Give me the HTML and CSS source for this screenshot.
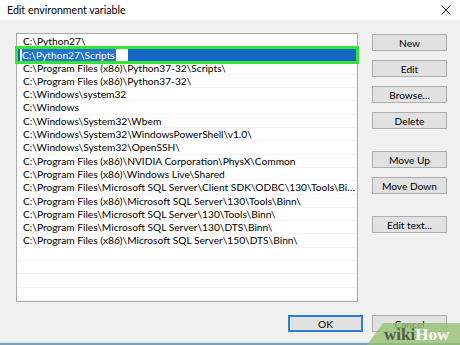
FILE: index.html
```html
<!DOCTYPE html>
<html lang="en">
<head>
  <meta charset="UTF-8">
  <title>Edit environment variable</title>
  <link rel="stylesheet" href="styles.css">
</head>
<body>

<div class="window">
  <div class="titlebar">
    <span class="title">Edit environment variable</span>
    <svg class="close" width="10" height="10" viewBox="0 0 10 10">
      <path d="M0.5 0.5 L9.5 9.5 M9.5 0.5 L0.5 9.5" stroke="#222" stroke-width="1" fill="none"/>
    </svg>
  </div>

  <div class="content">
    <div class="list">
      <div class="row">C:\Python27\</div>
      <div class="row selected">
        <span class="edit"><span class="sel">C:\Python27\Scripts</span></span>
      </div>
      <div class="row">C:\Program Files (x86)\Python37-32\Scripts\</div>
      <div class="row">C:\Program Files (x86)\Python37-32\</div>
      <div class="row">C:\Windows\system32</div>
      <div class="row">C:\Windows</div>
      <div class="row">C:\Windows\System32\Wbem</div>
      <div class="row">C:\Windows\System32\WindowsPowerShell\v1.0\</div>
      <div class="row">C:\Windows\System32\OpenSSH\</div>
      <div class="row">C:\Program Files (x86)\NVIDIA Corporation\PhysX\Common</div>
      <div class="row">C:\Program Files (x86)\Windows Live\Shared</div>
      <div class="row">C:\Program Files\Microsoft SQL Server\Client SDK\ODBC\130\Tools\Binn\</div>
      <div class="row">C:\Program Files (x86)\Microsoft SQL Server\130\Tools\Binn\</div>
      <div class="row">C:\Program Files\Microsoft SQL Server\130\Tools\Binn\</div>
      <div class="row">C:\Program Files\Microsoft SQL Server\130\DTS\Binn\</div>
      <div class="row">C:\Program Files (x86)\Microsoft SQL Server\150\DTS\Binn\</div>
      <div class="row"></div>
      <div class="row"></div>
      <div class="row"></div>
      <div class="row"></div>
    </div>

    <div class="side">
      <button class="btn">New</button>
      <button class="btn">Edit</button>
      <button class="btn">Browse...</button>
      <button class="btn">Delete</button>
      <button class="btn gap">Move Up</button>
      <button class="btn">Move Down</button>
      <button class="btn gap">Edit text...</button>
    </div>
  </div>

  <div class="footer">
    <button class="btn default">OK</button>
    <button class="btn">Cancel</button>
  </div>

  <div class="taskbar"></div>

  <div class="badge">
    <span class="wiki">wiki</span><span class="how">How</span>
  </div>
</div>

</body>
</html>
```

FILE: styles.css
```css
body {
  margin: 0;
  font-family: Lato, 'Noto Sans', sans-serif;
  color: #000;
}

.window {
  position: relative;
  width: 460px;
  height: 345px;
  background-color: #f0f0f0;
  overflow: hidden;
  display: flex;
  flex-direction: column;
}

.titlebar {
  height: 20px;
  background-color: #fff;
  display: flex;
  align-items: center;
  justify-content: space-between;
  padding: 0 9px 0 7px;
  font-size: 10.6px;
}

.close { margin-top: -1px; }

.content {
  display: flex;
  padding: 13px 0 0 16px;
  gap: 14px;
}

.list {
  width: 340px;
  height: 266px;
  background-color: #fff;
  border: 1px solid #a9a9a9;
  padding-top: 1px;
}

.row {
  height: 13.3px;
  line-height: 13.3px;
  padding-left: 6px;
  font-size: 10.2px;
  white-space: nowrap;
  overflow: hidden;
  text-overflow: ellipsis;
  box-sizing: border-box;
  border-bottom: 1px solid #f4f4f4;
}

.row.selected {
  background-color: #1466c6;
  padding-left: 3px;
  outline: 3px solid #34e534;
  outline-offset: -1px;
  display: flex;
  align-items: center;
  border-bottom: none;
  overflow: visible;
}

.edit {
  background-color: #fff;
  width: 106px;
  height: 12px;
  display: flex;
  align-items: center;
  padding-left: 2px;
}

.sel {
  background-color: #2374d2;
  color: #fff;
  line-height: 12px;
  padding-right: 1px;
}

.side {
  width: 75px;
  display: flex;
  flex-direction: column;
  gap: 9px;
  padding-top: 1px;
}

.btn {
  width: 75px;
  height: 17px;
  padding: 0;
  font-family: Lato, 'Noto Sans', sans-serif;
  font-size: 10.2px;
  color: #000;
  background-color: #e1e1e1;
  border: 1px solid #adadad;
}

.side .gap { margin-top: 13px; }

.footer {
  display: flex;
  justify-content: flex-end;
  gap: 9px;
  padding: 13px 13px 0 0;
}

.btn.default {
  border: 2px solid #2b7fd6;
}

.taskbar {
  position: absolute;
  left: 0;
  right: 0;
  bottom: 0;
  height: 2px;
  background-color: #7d9fb5;
  border-top: 1px solid #cfe4f0;
}

.badge {
  position: absolute;
  right: 0;
  bottom: 0;
  width: 93px;
  height: 22px;
  background-color: rgba(150, 192, 112, 0.8);
  clip-path: polygon(16px 0, 100% 0, 100% 100%, 0 100%);
  padding-left: 17px;
  box-sizing: border-box;
  font-family: 'Liberation Serif', serif;
  font-weight: bold;
  font-size: 17px;
  line-height: 24px;
}

.wiki { color: #545c48; }

.how { color: #fff; }
```
